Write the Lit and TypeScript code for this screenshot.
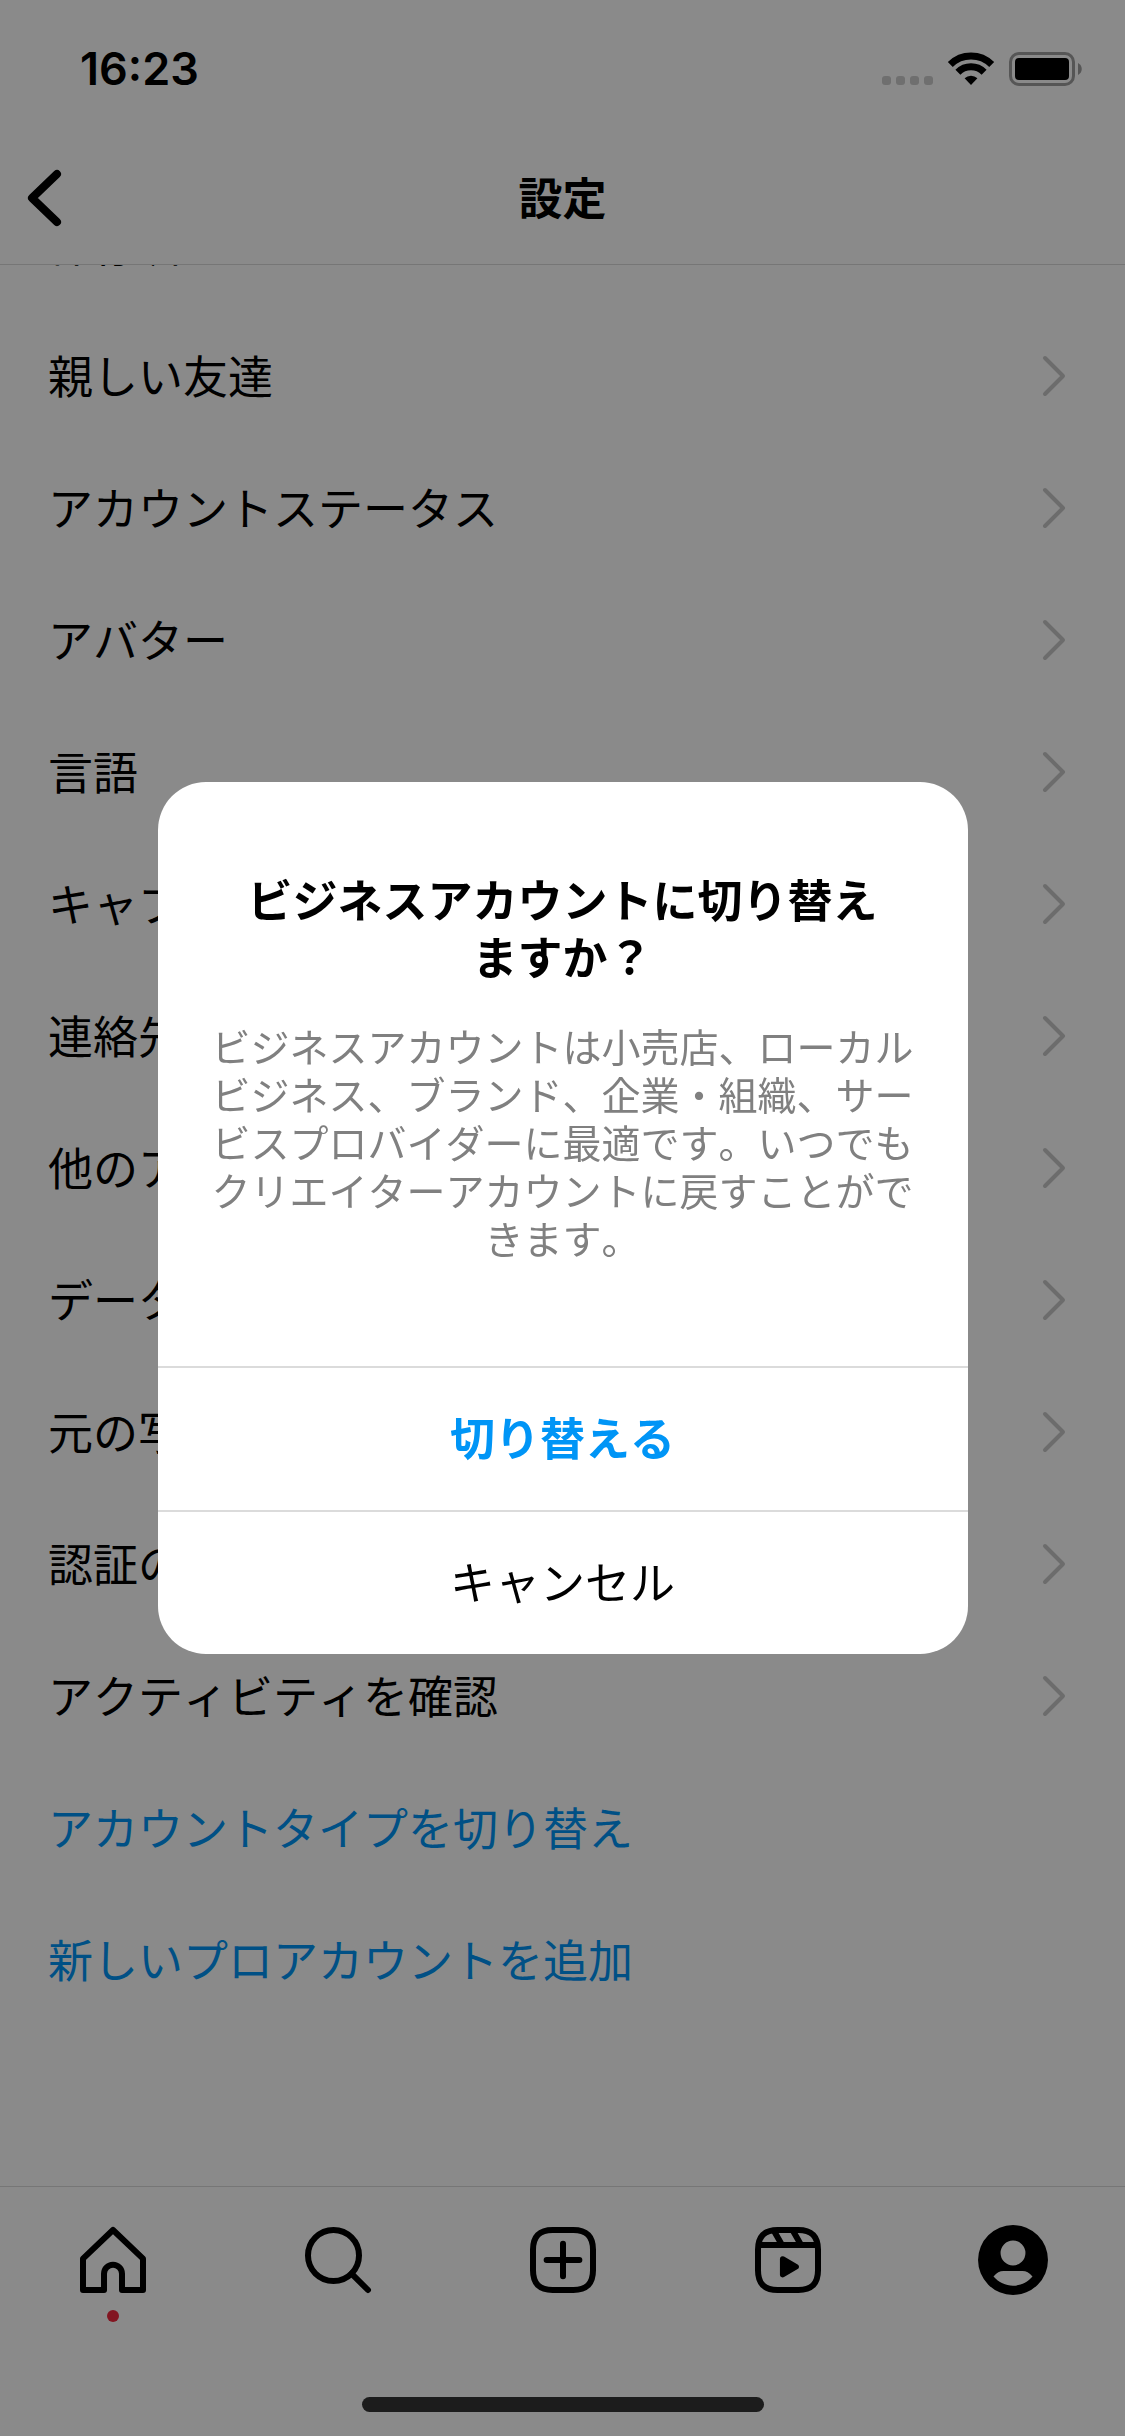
import { LitElement, html, svg, css, nothing } from "lit";
import { customElement, property, state } from "lit/decorators.js";

interface Item {
  label: string;
  action?: boolean;
}

const ITEMS: Item[] = [
  { label: "保存済み" },
  { label: "親しい友達" },
  { label: "アカウントステータス" },
  { label: "アバター" },
  { label: "言語" },
  { label: "キャプション" },
  { label: "連絡先の同期" },
  { label: "他のアプリ" },
  { label: "データ使用" },
  { label: "元の写真" },
  { label: "認証の申請" },
  { label: "アクティビティを確認" },
  { label: "アカウントタイプを切り替え", action: true },
  { label: "新しいプロアカウントを追加", action: true },
];

const ROUNDED_FRAME =
  "M2 12v3.45c0 2.849.698 4.005 1.606 4.944.94.909 2.098 1.608 4.946 1.608h6.896c2.848 0 4.006-.7 4.946-1.608C21.302 19.455 22 18.3 22 15.45V8.552c0-2.849-.698-4.006-1.606-4.945C19.454 2.7 18.296 2 15.448 2H8.552c-2.848 0-4.006.699-4.946 1.607C2.698 4.547 2 5.703 2 8.552Z";

const GLYPHS = {
  home: svg`<path d="M9.005 16.545a2.997 2.997 0 0 1 2.997-2.997A2.997 2.997 0 0 1 15 16.545V22h7V11.543L12 2 2 11.543V22h7.005Z" />`,
  search: svg`<circle cx="10.5" cy="10.5" r="8.5" /><path d="M16.511 16.511 22 22" />`,
  create: svg`<path d=${ROUNDED_FRAME} /><path d="M6.545 12h10.91M12 6.545v10.91" />`,
  reels: svg`
    <path d=${ROUNDED_FRAME} />
    <path stroke-linecap="butt" d="M2.049 7.002h19.9M13.504 2.001l2.858 5.001M7.207 2.11l2.795 4.892" />
    <path fill="currentColor" stroke="none" d="M9.763 17.664a.908.908 0 0 1-.454-.787V11.63a.909.909 0 0 1 1.364-.788l4.545 2.624a.909.909 0 0 1 0 1.575l-4.545 2.624a.91.91 0 0 1-.91 0Z" />`,
  profile: svg`
    <path fill="currentColor" stroke="none" fill-rule="evenodd" d="M12 .35a11.65 11.65 0 1 0 0 23.3a11.65 11.65 0 1 0 0-23.3ZM12 5.5a4.15 4.15 0 1 1 0 8.3a4.15 4.15 0 1 1 0-8.3ZM5.5 17.5C6.6 16.3 7.6 15.7 8.8 15.7H15.2C16.4 15.7 17.4 16.3 18.5 17.5C16.8 19.5 14.4 20.55 12 20.55C9.6 20.55 7.2 19.5 5.5 17.5Z" />`,
};

type Glyph = keyof typeof GLYPHS;

const TABS: { glyph: Glyph; label: string; badge?: boolean }[] = [
  { glyph: "home", label: "ホーム", badge: true },
  { glyph: "search", label: "検索" },
  { glyph: "create", label: "作成" },
  { glyph: "reels", label: "リール" },
  { glyph: "profile", label: "プロフィール" },
];

@customElement("status-bar")
class StatusBar extends LitElement {
  static styles = css`
    :host {
      display: flex;
      align-items: center;
      justify-content: space-between;
      box-sizing: border-box;
      height: 138px;
      padding: 0 43px 0 80px;
    }
    .time {
      font: 600 45px/54px Inter, "Liberation Sans", sans-serif;
    }
    .signals {
      display: block;
      width: 200px;
      height: 34px;
    }
  `;

  render() {
    return html`
      <span class="time">16:23</span>
      <svg class="signals" viewBox="0 0 200 34" fill="none" aria-hidden="true">
        <g fill="#cecece">
          <rect x="0" y="24" width="9" height="9" rx="3" />
          <rect x="14" y="24" width="9" height="9" rx="3" />
          <rect x="28" y="24" width="9" height="9" rx="3" />
          <rect x="42" y="24" width="9" height="9" rx="3" />
        </g>
        <g stroke="#000" stroke-width="7">
          <path d="M68.3 12.6a29.5 29.5 0 0 1 41.4 0" />
          <path d="M75.9 20.2a18.5 18.5 0 0 1 26.2 0" />
        </g>
        <path fill="#000" d="M89 33l-6.4-6.7a9.3 9.3 0 0 1 12.8 0Z" />
        <rect x="128.5" y="1.5" width="63" height="31" rx="8.5" stroke="#9f9f9f" stroke-width="3" />
        <rect x="133" y="6" width="54" height="22" rx="4" fill="#000" />
        <path fill="#9f9f9f" d="M196 11c5 2.500 5 9.500 0 12Z" />
      </svg>
    `;
  }
}

@customElement("settings-list")
class SettingsList extends LitElement {
  @property({ attribute: false }) items: Item[] = [];

  static styles = css`
    :host {
      display: block;
      overflow: hidden;
    }
    .list {
      list-style: none;
      margin: -87px 0 0;
      padding: 0;
    }
    .row {
      display: flex;
      align-items: center;
      justify-content: space-between;
      box-sizing: border-box;
      width: 100%;
      height: 132px;
      padding: 0 59px 0 48px;
      border: 0;
      background: none;
      color: #000;
      font: inherit;
      font-size: 45px;
      text-align: left;
    }
    .label {
      padding-bottom: 4px;
    }
    .action {
      color: #0095f6;
    }
    .chevron {
      display: block;
      width: 24px;
      height: 42px;
    }
  `;

  render() {
    return html`
      <ul class="list">
        ${this.items.map(
          (item) => html`
            <li>
              <button class="row ${item.action ? "action" : ""}" type="button">
                <span class="label">${item.label}</span>
                ${item.action
                  ? nothing
                  : html`<svg class="chevron" viewBox="0 0 24 42" aria-hidden="true">
                      <path d="M3 3l18 18L3 39" fill="none" stroke="#c8c8c8" stroke-width="4" stroke-linecap="round" stroke-linejoin="round" />
                    </svg>`}
              </button>
            </li>
          `
        )}
      </ul>
    `;
  }
}

@customElement("tab-bar")
class TabBar extends LitElement {
  static styles = css`
    :host {
      display: block;
      border-top: 1px solid #dbdbdb;
    }
    .tabs {
      display: grid;
      grid-template-columns: repeat(5, 1fr);
    }
    .tab {
      position: relative;
      display: flex;
      justify-content: center;
      height: 101px;
      padding-top: 37px;
      color: #000;
    }
    .icon {
      display: block;
      width: 72px;
      height: 72px;
    }
    .badge {
      position: absolute;
      top: 123px;
      left: 50%;
      width: 12px;
      height: 12px;
      margin-left: -6px;
      border-radius: 50%;
      background: #f0283e;
    }
    .indicator {
      width: 402px;
      height: 15px;
      margin: 72px auto 24px;
      border-radius: 8px;
      background: #343434;
    }
  `;

  render() {
    return html`
      <nav class="tabs">
        ${TABS.map(
          (tab) => html`
            <a class="tab" href="#${tab.glyph}" aria-label=${tab.label}>
              <svg class="icon" viewBox="0 0 24 24" fill="none" stroke="currentColor" stroke-width="2" stroke-linecap="round" stroke-linejoin="round" aria-hidden="true">
                ${GLYPHS[tab.glyph]}
              </svg>
              ${tab.badge ? html`<span class="badge"></span>` : nothing}
            </a>
          `
        )}
      </nav>
      <div class="indicator"></div>
    `;
  }
}

@customElement("confirm-dialog")
class ConfirmDialog extends LitElement {
  static styles = css`
    :host {
      position: fixed;
      inset: 0;
      display: flex;
      align-items: center;
      justify-content: center;
      background: rgba(0, 0, 0, 0.46);
    }
    .dialog {
      width: 72%;
      border-radius: 48px;
      overflow: hidden;
      background: #fff;
      text-align: center;
    }
    .content {
      padding: 88px 48px 105px;
    }
    .title {
      margin: 0 24px 37px;
      color: #000;
      font-size: 45px;
      font-weight: 700;
      line-height: 57px;
    }
    .message {
      margin: 0;
      color: #808080;
      font-size: 39px;
      line-height: 48px;
    }
    .choice {
      display: block;
      box-sizing: border-box;
      width: 100%;
      height: 144px;
      padding: 0 0 6px;
      border: 0;
      border-top: 2px solid #dbdbdb;
      background: none;
      color: #000;
      font: inherit;
      font-size: 45px;
    }
    .primary {
      color: #0095f6;
      font-weight: 700;
    }
  `;

  private close() {
    this.dispatchEvent(new CustomEvent("close"));
  }

  render() {
    return html`
      <div class="dialog" role="dialog" aria-modal="true" aria-labelledby="title" aria-describedby="message">
        <div class="content">
          <h2 class="title" id="title">ビジネスアカウントに切り替えますか？</h2>
          <p class="message" id="message">ビジネスアカウントは小売店、ローカルビジネス、ブランド、企業・組織、サービスプロバイダーに最適です。いつでもクリエイターアカウントに戻すことができます。</p>
        </div>
        <button class="choice primary" type="button" @click=${this.close}>切り替える</button>
        <button class="choice" type="button" @click=${this.close}>キャンセル</button>
      </div>
    `;
  }
}

@customElement("app-root")
class AppRoot extends LitElement {
  @state() private confirming = true;

  static styles = css`
    :host {
      display: flex;
      flex-direction: column;
      height: 100vh;
      background: #fff;
      color: #000;
      font-family: "Noto Sans CJK JP", sans-serif;
      font-kerning: none;
    }
    .header {
      display: grid;
      grid-template-columns: 96px 1fr 96px;
      align-items: center;
      height: 120px;
      padding-bottom: 6px;
      border-bottom: 1px solid #dbdbdb;
    }
    .back {
      display: flex;
      padding: 0 0 0 27px;
      border: 0;
      background: none;
      color: #000;
    }
    .back-icon {
      display: block;
      width: 36px;
      height: 60px;
    }
    .heading {
      margin: 0;
      padding-bottom: 4px;
      font-size: 44px;
      font-weight: 700;
      line-height: 60px;
      text-align: center;
    }
    .body {
      flex: 1;
      min-height: 0;
      font-kerning: none;
    }
  `;

  render() {
    return html`
      <status-bar></status-bar>
      <header class="header">
        <button class="back" type="button" aria-label="戻る">
          <svg class="back-icon" viewBox="0 0 36 60" aria-hidden="true">
            <path d="M30 6L5 30l25 24" fill="none" stroke="currentColor" stroke-width="8" stroke-linecap="round" stroke-linejoin="round" />
          </svg>
        </button>
        <h1 class="heading">設定</h1>
      </header>
      <settings-list class="body" .items=${ITEMS}></settings-list>
      <tab-bar></tab-bar>
      ${this.confirming
        ? html`<confirm-dialog @close=${() => (this.confirming = false)}></confirm-dialog>`
        : nothing}
    `;
  }
}
